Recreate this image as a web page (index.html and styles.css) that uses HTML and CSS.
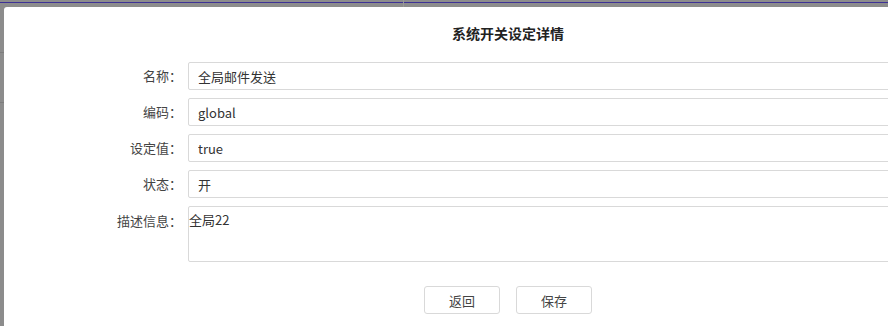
FILE: index.html
```html
<!DOCTYPE html>
<html lang="zh-CN">
<head>
    <meta charset="UTF-8">
    <meta name="viewport" content="width=device-width, initial-scale=1.0">
    <title>系统开关设定详情</title>
    <link rel="stylesheet" href="styles.css">
</head>
<body>
    <div class="topbar">
        <div class="topbar-line"></div>
        <div class="topbar-split"></div>
    </div>

    <div class="page">
        <div class="side-strip"></div>

        <div class="modal">
            <h2 class="modal-title">系统开关设定详情</h2>

            <form class="detail-form">
                <div class="form-row">
                    <label for="name">名称：</label>
                    <input type="text" id="name" value="全局邮件发送">
                </div>
                <div class="form-row">
                    <label for="code">编码：</label>
                    <input type="text" id="code" value="global">
                </div>
                <div class="form-row">
                    <label for="value">设定值：</label>
                    <input type="text" id="value" value="true">
                </div>
                <div class="form-row">
                    <label for="state">状态：</label>
                    <input type="text" id="state" value="开">
                </div>
                <div class="form-row form-row-top">
                    <label for="desc">描述信息：</label>
                    <textarea id="desc">全局22</textarea>
                </div>

                <div class="actions">
                    <button type="button" class="btn">返回</button>
                    <button type="button" class="btn">保存</button>
                </div>
            </form>
        </div>
    </div>
</body>
</html>
```

FILE: styles.css
```css
* {
    box-sizing: border-box;
    margin: 0;
    padding: 0;
}

body {
    width: 888px;
    height: 326px;
    overflow: hidden;
    background-color: #8c8c8c;
    font-family: "Noto Sans CJK SC", "Noto Sans", sans-serif;
    font-size: 13px;
    color: #333;
}

/* header of the page under the mask */
.topbar {
    position: relative;
    height: 7px;
}

.topbar-line {
    position: absolute;
    top: 2px;
    left: 0;
    right: 0;
    height: 1px;
    background-color: #3d3196;
}

.topbar-split {
    position: absolute;
    top: 0;
    left: 403px;
    width: 1px;
    height: 7px;
    background-color: #999;
}

.page {
    display: flex;
    height: 319px;
    overflow: hidden;
}

.side-strip {
    width: 4px;
    flex-shrink: 0;
    background:
        linear-gradient(#7d7d7d, #7d7d7d) 0 45px / 4px 1px no-repeat,
        linear-gradient(#7d7d7d, #7d7d7d) 0 95px / 4px 1px no-repeat;
}

.modal {
    width: 1008px;
    flex-shrink: 0;
    background: #fff;
    border-radius: 3px 3px 0 0;
    padding-top: 16px;
}

.modal-title {
    text-align: center;
    font-size: 14px;
    font-weight: 700;
    line-height: 20px;
    color: #222;
    margin-bottom: 19px;
}

.detail-form {
    display: flex;
    flex-direction: column;
    gap: 8px;
}

.form-row {
    display: flex;
    align-items: center;
    gap: 6px;
}

.form-row-top {
    align-items: flex-start;
}

.form-row label {
    width: 178px;
    text-align: right;
    color: #444;
    line-height: 18px;
}

.form-row-top label {
    padding-top: 6px;
}

input, textarea {
    width: 800px;
    height: 28px;
    border: 1px solid #d9d9d9;
    border-radius: 2px;
    padding: 0 9px;
    font-family: inherit;
    font-size: 13px;
    color: #333;
    outline: none;
}

textarea {
    height: 56px;
    padding: 4px 0 0 0;
    line-height: 18px;
    resize: none;
}

.actions {
    display: flex;
    justify-content: center;
    gap: 16px;
    margin-top: 16px;
}

.btn {
    width: 76px;
    height: 28px;
    background: #fff;
    border: 1px solid #d9d9d9;
    border-radius: 3px;
    font-family: inherit;
    font-size: 13px;
    color: #444;
    cursor: pointer;
}
```
